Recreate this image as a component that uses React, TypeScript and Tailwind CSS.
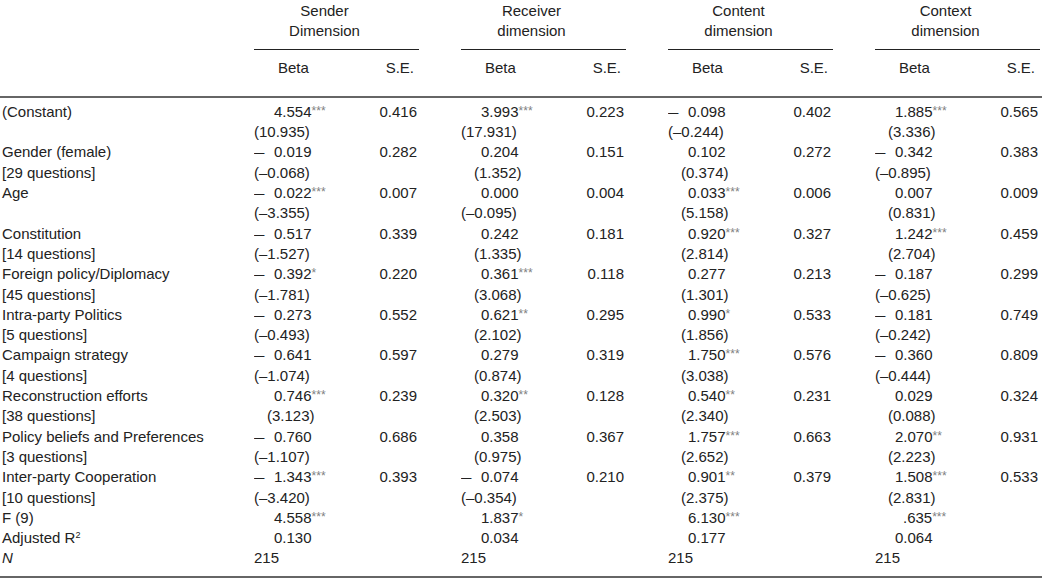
import React from "react";

type Cell = [string, string]; // beta, s.e.

const groups = [
  ["Sender", "Dimension"],
  ["Receiver", "dimension"],
  ["Content", "dimension"],
  ["Context", "dimension"],
];

// each variable: label, sub label, main line cells, t-values
const vars: { label: string; sub: string; main: Cell[]; t: string[] }[] = [
  {
    label: "(Constant)",
    sub: "",
    main: [["4.554***", "0.416"], ["3.993***", "0.223"], ["–0.098", "0.402"], ["1.885***", "0.565"]],
    t: ["(10.935)", "(17.931)", "(–0.244)", "(3.336)"],
  },
  {
    label: "Gender (female)",
    sub: "[29 questions]",
    main: [["–0.019", "0.282"], ["0.204", "0.151"], ["0.102", "0.272"], ["–0.342", "0.383"]],
    t: ["(–0.068)", "(1.352)", "(0.374)", "(–0.895)"],
  },
  {
    label: "Age",
    sub: "",
    main: [["–0.022***", "0.007"], ["0.000", "0.004"], ["0.033***", "0.006"], ["0.007", "0.009"]],
    t: ["(–3.355)", "(–0.095)", "(5.158)", "(0.831)"],
  },
  {
    label: "Constitution",
    sub: "[14 questions]",
    main: [["–0.517", "0.339"], ["0.242", "0.181"], ["0.920***", "0.327"], ["1.242***", "0.459"]],
    t: ["(–1.527)", "(1.335)", "(2.814)", "(2.704)"],
  },
  {
    label: "Foreign policy/Diplomacy",
    sub: "[45 questions]",
    main: [["–0.392*", "0.220"], ["0.361***", "0.118"], ["0.277", "0.213"], ["–0.187", "0.299"]],
    t: ["(–1.781)", "(3.068)", "(1.301)", "(–0.625)"],
  },
  {
    label: "Intra-party Politics",
    sub: "[5 questions]",
    main: [["–0.273", "0.552"], ["0.621**", "0.295"], ["0.990*", "0.533"], ["–0.181", "0.749"]],
    t: ["(–0.493)", "(2.102)", "(1.856)", "(–0.242)"],
  },
  {
    label: "Campaign strategy",
    sub: "[4 questions]",
    main: [["–0.641", "0.597"], ["0.279", "0.319"], ["1.750***", "0.576"], ["–0.360", "0.809"]],
    t: ["(–1.074)", "(0.874)", "(3.038)", "(–0.444)"],
  },
  {
    label: "Reconstruction efforts",
    sub: "[38 questions]",
    main: [["0.746***", "0.239"], ["0.320**", "0.128"], ["0.540**", "0.231"], ["0.029", "0.324"]],
    t: ["(3.123)", "(2.503)", "(2.340)", "(0.088)"],
  },
  {
    label: "Policy beliefs and Preferences",
    sub: "[3 questions]",
    main: [["–0.760", "0.686"], ["0.358", "0.367"], ["1.757***", "0.663"], ["2.070**", "0.931"]],
    t: ["(–1.107)", "(0.975)", "(2.652)", "(2.223)"],
  },
  {
    label: "Inter-party Cooperation",
    sub: "[10 questions]",
    main: [["–1.343***", "0.393"], ["–0.074", "0.210"], ["0.901**", "0.379"], ["1.508***", "0.533"]],
    t: ["(–3.420)", "(–0.354)", "(2.375)", "(2.831)"],
  },
];

const fitRows: { label: React.ReactNode; vals: string[] }[] = [
  { label: "F (9)", vals: ["4.558***", "1.837*", "6.130***", ".635***"] },
  {
    label: (
      <>
        Adjusted R<span className="relative -top-[5px] text-[9px] leading-none">2</span>
      </>
    ),
    vals: ["0.130", "0.034", "0.177", "0.064"],
  },
  { label: <span className="italic">N</span>, vals: ["215", "215", "215", "215"] },
];

function Stars({ n }: { n: string }) {
  if (!n) return null;
  return <span className="relative -top-[2px] text-[12px] leading-none text-[#808080]">{n}</span>;
}

function Beta({ v }: { v: string }) {
  const m = v.match(/^(.*?)(\**)$/);
  const core = m ? m[1] : v;
  const stars = m ? m[2] : "";
  if (core === "") return <div />;
  if (core.startsWith("(")) {
    const intDigits = core.replace("(", "").split(".")[0].length;
    const indent = core.includes("–") || intDigits >= 2 ? "pl-0" : "pl-[13px]";
    return <div className={indent}>{core}</div>;
  }
  if (core.startsWith("–")) {
    return (
      <div>
        <span className="inline-block w-[20px]">
          <span className="inline-block origin-left scale-x-125">–</span>
        </span>
        {core.slice(1)}
        <Stars n={stars} />
      </div>
    );
  }
  if (core === "215") return <div>{core}</div>;
  if (core.startsWith(".")) {
    return (
      <div className="pl-[28px]">
        {core}
        <Stars n={stars} />
      </div>
    );
  }
  return (
    <div className="pl-[20px]">
      {core}
      <Stars n={stars} />
    </div>
  );
}

function Line({ label, cells }: { label: React.ReactNode; cells: Cell[] }) {
  return (
    <div className="flex h-[20.3px]">
      <div className="w-[254px] pl-[2px] whitespace-nowrap">{label}</div>
      <div className="flex gap-[42px]">
        {cells.map((c, i) => (
          <div key={i} className="flex w-[165px] whitespace-nowrap">
            <div className="flex-1">
              <Beta v={c[0]} />
            </div>
            <div className="w-[54px] pr-[2px] text-right">{c[1]}</div>
          </div>
        ))}
      </div>
    </div>
  );
}

export default function App() {
  return (
    <div className="w-[1042px] h-[579px] overflow-hidden bg-white font-['Liberation_Sans',Arial,sans-serif] text-[15px] leading-[20.3px] text-[#222]">
      {/* group titles */}
      <div className="flex pt-px">
        <div className="w-[254px]" />
        <div className="flex gap-[42px]">
          {groups.map((g) => (
            <div key={g[0]} className="w-[165px]">
              <div className="pr-[24px] text-center">
                <div>{g[0]}</div>
                <div>{g[1]}</div>
              </div>
              <div className="mt-[7px] h-px bg-[#222]" />
            </div>
          ))}
        </div>
      </div>

      <div className="mt-[8px] flex">
        <div className="w-[254px]" />
        <div className="flex gap-[42px]">
          {groups.map((g) => (
            <div key={g[0]} className="flex w-[165px]">
              <div className="flex-1 pl-[24px]">Beta</div>
              <div className="w-[54px] pr-[5px] text-right">S.E.</div>
            </div>
          ))}
        </div>
      </div>

      <div className="mt-[18px] h-[2px] bg-[#666]" />

      <div className="pt-[4px]">
        {vars.map((v) => (
          <React.Fragment key={v.label}>
            <Line label={v.label} cells={v.main} />
            <Line label={v.sub} cells={v.t.map((t) => [t, ""] as Cell)} />
          </React.Fragment>
        ))}
        {fitRows.map((r, i) => (
          <Line key={i} label={r.label} cells={r.vals.map((x) => [x, ""] as Cell)} />
        ))}
      </div>

      <div className="mt-[7px] h-[2px] bg-[#666]" />
    </div>
  );
}
